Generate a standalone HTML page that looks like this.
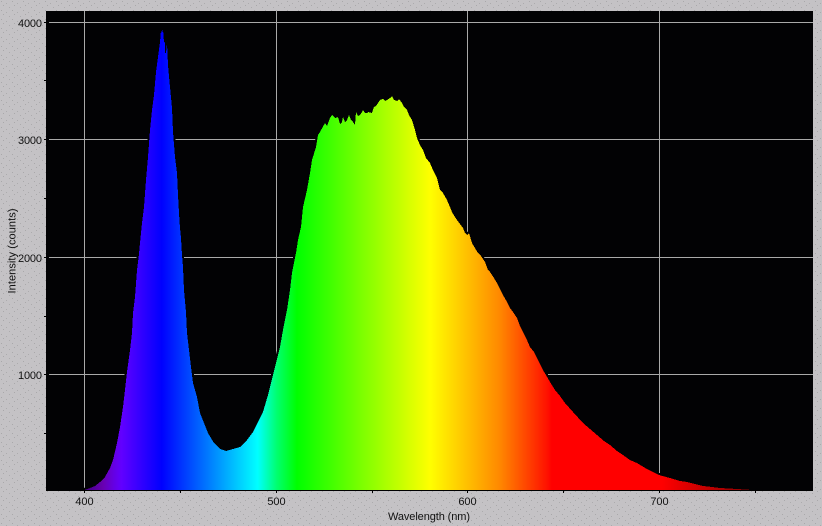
<!DOCTYPE html>
<html>
<head>
<meta charset="utf-8">
<style>
html,body{margin:0;padding:0;width:822px;height:526px;overflow:hidden;background:#c4c2c4}
svg{display:block}
text{font-family:"Liberation Sans",sans-serif;font-size:11px;fill:#111}
</style>
</head>
<body>
<svg width="822" height="526" viewBox="0 0 822 526" xmlns="http://www.w3.org/2000/svg">
<defs>
<pattern id="d" width="11" height="9" patternUnits="userSpaceOnUse">
<rect width="11" height="9" fill="#c4c2c5"/>
<rect x="1" y="1" width="1" height="1" fill="#a9a8aa"/>
<rect x="6" y="3" width="1" height="1" fill="#acabad"/>
<rect x="3" y="5" width="1" height="1" fill="#a9a8aa"/>
<rect x="9" y="7" width="1" height="1" fill="#acabad"/>
</pattern>
<linearGradient id="g" gradientUnits="userSpaceOnUse" x1="84" y1="0" x2="760" y2="0">
<stop offset="0" stop-color="#400080"/>
<stop offset="0.028" stop-color="#6800b0"/>
<stop offset="0.043" stop-color="#6500e0"/>
<stop offset="0.055" stop-color="#6200ff"/>
<stop offset="0.115" stop-color="#0000ff"/>
<stop offset="0.178" stop-color="#0070ff"/>
<stop offset="0.257" stop-color="#00ffff"/>
<stop offset="0.285" stop-color="#00ff70"/>
<stop offset="0.315" stop-color="#00ff00"/>
<stop offset="0.512" stop-color="#ffff00"/>
<stop offset="0.615" stop-color="#ff8800"/>
<stop offset="0.686" stop-color="#ff1000"/>
<stop offset="0.692" stop-color="#ff0000"/>
<stop offset="0.855" stop-color="#ff0000"/>
<stop offset="0.96" stop-color="#a00000"/>
<stop offset="1" stop-color="#800000"/>
</linearGradient>
<clipPath id="c"><rect x="46" y="11" width="767" height="479"/></clipPath>
</defs>

<rect width="822" height="526" fill="url(#d)"/>
<rect x="46" y="11" width="767" height="479" fill="#020204"/>

<g fill="#a9a9a9" shape-rendering="crispEdges">
<rect x="49" y="22" width="764" height="1"/>
<rect x="49" y="139" width="764" height="1"/>
<rect x="49" y="257" width="764" height="1"/>
<rect x="49" y="374" width="764" height="1"/>
<rect x="84" y="11" width="1" height="479"/>
<rect x="276" y="11" width="1" height="479"/>
<rect x="467" y="11" width="1" height="479"/>
<rect x="659" y="11" width="1" height="479"/>
</g>

<g clip-path="url(#c)" shape-rendering="crispEdges">
<polygon fill="url(#g)" stroke="#020204" stroke-width="4" paint-order="stroke" points="84,490 90,488 95,486 100,482 105,477 110,468 113,460 117,443 120,427 123,407 125,390 127,372 130,350 132,333 133,313 135,297 137,270 139,254 140,243 142,223 144,207 146,180 148,157 150,130 152,110 154,95 156,72 158,57 160,42 161,30 162,33 163,29 164,42 165,43 165,53 166,53 167,43 168,65 170,87 172,108 173,132 175,157 177,173 178,195 179,213 180,228 181,238 182,255 183,267 184,290 186,312 187,333 189,350 191,367 193,383 197,397 200,413 204,423 208,433 214,443 220,449 226,451 233,449 240,447 247,440 253,432 258,422 263,412 268,395 273,375 276,363 280,347 283,330 287,310 290,290 292,273 296,253 298,240 301,227 303,207 307,190 310,173 312,160 316,147 318,135 320,132 325,123 327,126 330,118 332,115 335,118 338,117 340,124 342,122 343,117 345,122 347,120 349,115 351,120 353,122 355,125 356,112 358,116 360,115 362,112 363,110 365,113 367,113 368,112 372,113 374,107 376,106 380,100 383,99 385,101 387,100 390,98 392,96 394,100 397,101 399,99 402,103 404,107 407,110 409,115 412,120 415,130 417,138 420,145 423,150 426,158 430,163 433,170 437,178 440,190 443,193 447,200 450,207 452,212 455,217 457,220 460,224 463,228 465,233 467,235 469,233 472,243 475,248 478,253 481,256 485,262 488,270 490,272 494,278 497,283 500,289 503,295 507,302 510,308 513,312 517,318 520,326 523,332 527,340 530,347 534,352 537,358 540,364 543,370 546,375 550,382 555,390 560,396 565,403 573,412 583,423 590,429 597,435 604,441 610,445 617,451 623,455 630,460 637,463 647,469 659,475 670,478 680,481 687,482 695,484 703,486 712,487 720,488 737,489 753,490 760,490"/>
</g>

<g fill="#000" shape-rendering="crispEdges">
<rect x="46" y="490" width="767" height="1"/>
<rect x="44" y="22" width="2" height="1"/>
<rect x="44" y="80" width="2" height="1"/>
<rect x="44" y="139" width="2" height="1"/>
<rect x="44" y="198" width="2" height="1"/>
<rect x="44" y="257" width="2" height="1"/>
<rect x="44" y="316" width="2" height="1"/>
<rect x="44" y="374" width="2" height="1"/>
<rect x="44" y="433" width="2" height="1"/>
<rect x="84" y="491" width="1" height="2"/>
<rect x="180" y="491" width="1" height="2"/>
<rect x="276" y="491" width="1" height="2"/>
<rect x="372" y="491" width="1" height="2"/>
<rect x="467" y="491" width="1" height="2"/>
<rect x="563" y="491" width="1" height="2"/>
<rect x="659" y="491" width="1" height="2"/>
<rect x="755" y="491" width="1" height="2"/>
</g>

<text x="42" y="27" text-anchor="end" textLength="24">4000</text>
<text x="42" y="144" text-anchor="end" textLength="24">3000</text>
<text x="42" y="262" text-anchor="end" textLength="24">2000</text>
<text x="42" y="379" text-anchor="end" textLength="24">1000</text>
<text x="84.5" y="505" text-anchor="middle">400</text>
<text x="276.5" y="505" text-anchor="middle">500</text>
<text x="467.5" y="505" text-anchor="middle">600</text>
<text x="659.5" y="505" text-anchor="middle">700</text>
<text x="429" y="520" text-anchor="middle" textLength="82">Wavelength (nm)</text>
<text transform="translate(15.5,251) rotate(-90)" text-anchor="middle" textLength="85">Intensity (counts)</text>
</svg>
</body>
</html>
